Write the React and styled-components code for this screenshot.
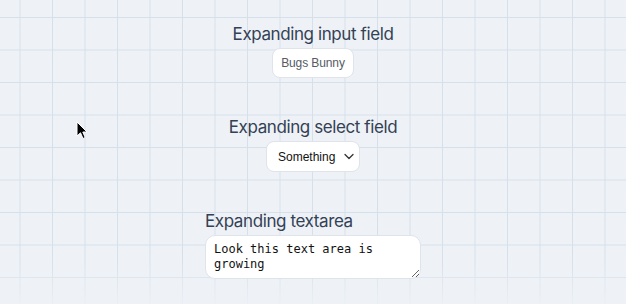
import React, { useState } from "react";
import styled, { createGlobalStyle } from "styled-components";

const Global = createGlobalStyle`
  html, body { margin: 0; padding: 0; }
  body {
    width: 626px;
    height: 304px;
    overflow: hidden;
    background-color: #eef2f7;
    background-image:
      linear-gradient(to bottom, rgba(238,242,247,0) 262px, rgba(238,242,247,0.85) 304px),
      linear-gradient(to right, #d6e0eb 1px, transparent 1px),
      linear-gradient(to bottom, #d6e0eb 1px, transparent 1px);
    background-size: 100% 100%, 32.5px 32.5px, 32.5px 32.5px;
    background-position: 0 0, 19.5px 0, 0 17px;
    font-family: Inter, "Liberation Sans", sans-serif;
  }
`;

const Page = styled.main`
  position: relative;
  height: 304px;
  box-sizing: border-box;
  padding-top: 24px;
  display: flex;
  flex-direction: column;
  align-items: center;
  gap: 39px;
`;

const Field = styled.label`
  display: flex;
  flex-direction: column;
  align-items: ${(p) => (p.$align === "start" ? "flex-start" : "center")};
  gap: 4px;
`;

const Title = styled.span`
  font-family: Inter, "Liberation Sans", sans-serif;
  font-size: 17px;
  line-height: 20px;
  letter-spacing: -0.4px;
  color: #334155;
`;

const TextInput = styled.input`
  box-sizing: border-box;
  height: 30px;
  width: 82px;
  padding: 0 3px;
  border: 1px solid #dfe4ea;
  border-radius: 8px;
  background: #fff;
  font-family: "Liberation Sans", Arial, sans-serif;
  font-size: 12px;
  letter-spacing: -0.1px;
  color: #555b63;
  text-align: center;
  outline: none;
`;

const SelectWrap = styled.div`
  position: relative;
  display: inline-flex;
`;

const Select = styled.select`
  appearance: none;
  box-sizing: border-box;
  height: 31px;
  width: 94px;
  padding: 0 18px 0 11px;
  border: 1px solid #dfe4ea;
  border-radius: 8px;
  background: #fff;
  font-family: "Liberation Sans", Arial, sans-serif;
  font-size: 12px;
  color: #111;
  outline: none;
`;

const Chevron = styled.svg`
  position: absolute;
  right: 6px;
  top: 12px;
  width: 10px;
  height: 7px;
  pointer-events: none;
`;

const TextArea = styled.textarea`
  box-sizing: border-box;
  width: 216px;
  height: 44px;
  padding: 6px 8px;
  border: 1px solid #dfe4ea;
  border-radius: 10px;
  background: #fff;
  font-family: "DejaVu Sans Mono", "Liberation Mono", monospace;
  font-size: 12px;
  line-height: 15px;
  color: #111;
  outline: none;
  overflow: hidden;
`;

const Cursor = styled.svg`
  position: absolute;
  left: 76px;
  top: 121px;
  width: 12px;
  height: 19px;
`;

export default function App() {
  const [name, setName] = useState("Bugs Bunny");
  const [choice, setChoice] = useState("something");
  const [text, setText] = useState("Look this text area is growing");
  return (
    <>
      <Global />
      <Page>
        <Field>
          <Title>Expanding input field</Title>
          <TextInput value={name} onChange={(e) => setName(e.target.value)} />
        </Field>
        <Field>
          <Title>Expanding select field</Title>
          <SelectWrap>
            <Select value={choice} onChange={(e) => setChoice(e.target.value)}>
              <option value="something">Something</option>
              <option value="other">Other</option>
            </Select>
            <Chevron viewBox="0 0 10 7">
              <path d="M1 1.5 L5 5.5 L9 1.5" fill="none" stroke="#333" strokeWidth="1.3" strokeLinecap="round" strokeLinejoin="round" />
            </Chevron>
          </SelectWrap>
        </Field>
        <Field $align="start">
          <Title>Expanding textarea</Title>
          <TextArea value={text} onChange={(e) => setText(e.target.value)} />
        </Field>
        <Cursor viewBox="0 0 12 19">
          <path d="M1 1 L1 15 L4.5 11.8 L7 17.5 L9.2 16.5 L6.8 11 L11 11 Z" fill="#000" stroke="#fff" strokeWidth="1" strokeLinejoin="round" />
        </Cursor>
      </Page>
    </>
  );
}
